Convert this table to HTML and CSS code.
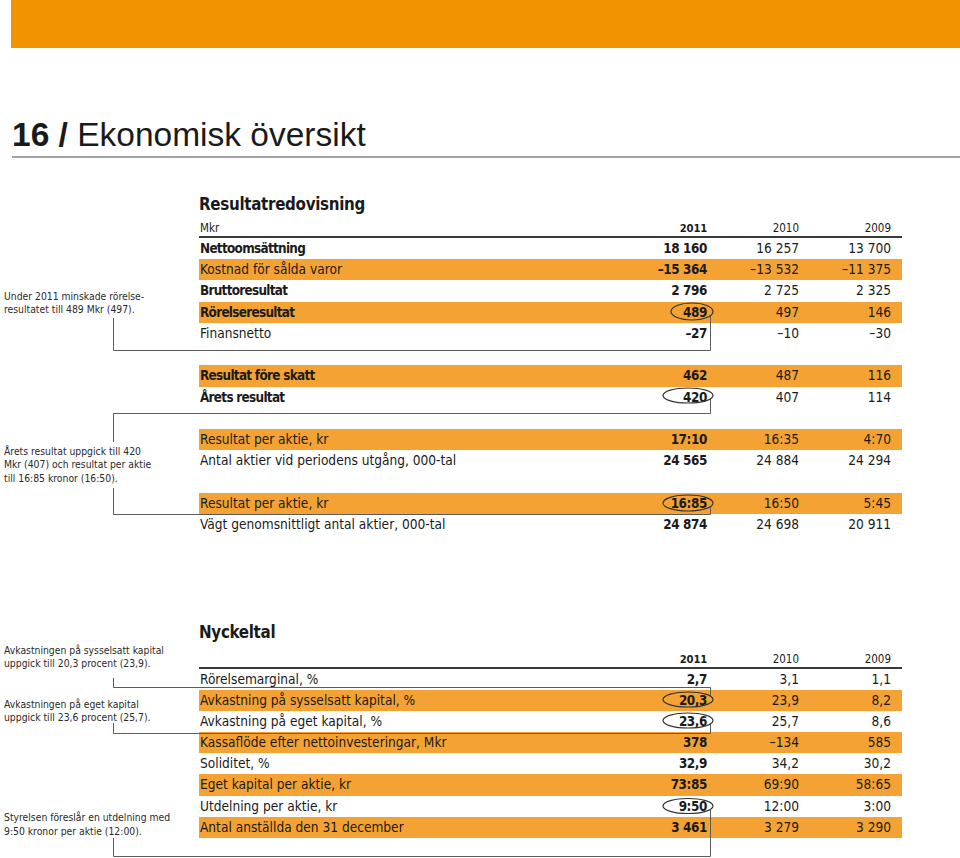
FILE: index.html
```html
<!DOCTYPE html>
<html lang="sv">
<head>
<meta charset="utf-8">
<title>16 / Ekonomisk översikt</title>
<link rel="stylesheet" href="styles.css">
</head>
<body>
<div class="topbar"></div>
<h1 class="page-title"><b>16 /</b> Ekonomisk översikt</h1>

<section class="sheet res">
  <h2 class="sec-title">Resultatredovisning</h2>
  <div class="row head"><span>Mkr</span><span>2011</span><span>2010</span><span>2009</span></div>
  <div class="row strong"><span>Nettoomsättning</span><span>18 160</span><span>16 257</span><span>13 700</span></div>
  <div class="row hl"><span>Kostnad för sålda varor</span><span>–15 364</span><span>–13 532</span><span>–11 375</span></div>
  <div class="row strong"><span>Bruttoresultat</span><span>2 796</span><span>2 725</span><span>2 325</span></div>
  <div class="row hl strong"><span>Rörelseresultat</span><span>489</span><span>497</span><span>146</span></div>
  <div class="row"><span>Finansnetto</span><span>–27</span><span>–10</span><span>–30</span></div>
  <div class="gap"></div>
  <div class="row hl strong"><span>Resultat före skatt</span><span>462</span><span>487</span><span>116</span></div>
  <div class="row strong"><span>Årets resultat</span><span>420</span><span>407</span><span>114</span></div>
  <div class="gap"></div>
  <div class="row hl"><span>Resultat per aktie, kr</span><span>17:10</span><span>16:35</span><span>4:70</span></div>
  <div class="row"><span>Antal aktier vid periodens utgång, 000-tal</span><span>24 565</span><span>24 884</span><span>24 294</span></div>
  <div class="gap"></div>
  <div class="row hl"><span>Resultat per aktie, kr</span><span>16:85</span><span>16:50</span><span>5:45</span></div>
  <div class="row"><span>Vägt genomsnittligt antal aktier, 000-tal</span><span>24 874</span><span>24 698</span><span>20 911</span></div>

  <p class="note rn1">Under 2011 minskade rörelse-<br>resultatet till 489 Mkr (497).</p>
  <p class="note rn2">Årets resultat uppgick till 420<br>Mkr (407) och resultat per aktie<br>till 16:85 kronor (16:50).</p>
</section>

<section class="sheet key">
  <h2 class="sec-title">Nyckeltal</h2>
  <div class="row head"><span></span><span>2011</span><span>2010</span><span>2009</span></div>
  <div class="row"><span>Rörelsemarginal, %</span><span>2,7</span><span>3,1</span><span>1,1</span></div>
  <div class="row hl"><span>Avkastning på sysselsatt kapital, %</span><span>20,3</span><span>23,9</span><span>8,2</span></div>
  <div class="row"><span>Avkastning på eget kapital, %</span><span>23,6</span><span>25,7</span><span>8,6</span></div>
  <div class="row hl"><span>Kassaflöde efter nettoinvesteringar, Mkr</span><span>378</span><span>–134</span><span>585</span></div>
  <div class="row"><span>Soliditet, %</span><span>32,9</span><span>34,2</span><span>30,2</span></div>
  <div class="row hl"><span>Eget kapital per aktie, kr</span><span>73:85</span><span>69:90</span><span>58:65</span></div>
  <div class="row"><span>Utdelning per aktie, kr</span><span>9:50</span><span>12:00</span><span>3:00</span></div>
  <div class="row hl"><span>Antal anställda den 31 december</span><span>3 461</span><span>3 279</span><span>3 290</span></div>

  <p class="note kn1">Avkastningen på sysselsatt kapital<br>uppgick till 20,3 procent (23,9).</p>
  <p class="note kn2">Avkastningen på eget kapital<br>uppgick till 23,6 procent (25,7).</p>
  <p class="note kn3">Styrelsen föreslår en utdelning med<br>9:50 kronor per aktie (12:00).</p>
</section>

<svg class="leaders" width="960" height="858" viewBox="0 0 960 858" aria-hidden="true">
  <g fill="none" stroke="#5c5c5c" stroke-width="1">
    <path d="M113.5 318V350.5H710.5V316"/>
    <path d="M113.5 442V413.5H710.5V399"/>
    <path d="M113.5 488V514.5H710.5V507"/>
    <path d="M113.5 678V687.5H710.5V696"/>
    <path d="M113.5 723V733.5H710.5V724"/>
    <path d="M113.5 838V856.5H710.5V810"/>
  </g>
  <g fill="none" stroke="#333" stroke-width="1.2">
    <ellipse cx="692" cy="311.5" rx="21" ry="8.5"/>
    <ellipse cx="688" cy="395.5" rx="25" ry="7.5"/>
    <ellipse cx="688" cy="503" rx="25" ry="8"/>
    <ellipse cx="688" cy="699.5" rx="25" ry="7.5"/>
    <ellipse cx="688" cy="720.5" rx="25" ry="7.5"/>
    <ellipse cx="688" cy="806" rx="25" ry="7.5"/>
  </g>
</svg>
</body>
</html>
```

FILE: styles.css
```css
* { box-sizing: border-box; }

body {
  margin: 0;
  position: relative;
  width: 960px;
  height: 858px;
  overflow: hidden;
  background: #fff;
  color: #1b1b1b;
  font-family: "DejaVu Sans Condensed", "Liberation Sans", Arial, sans-serif;
}

.topbar {
  margin-left: 11px;
  height: 48px;
  background: #f29400;
}

.page-title {
  margin: 67px 0 0 12px;
  padding-bottom: 1px;
  border-bottom: 2px solid #a3a3a3;
  font-family: "Liberation Sans", Arial, sans-serif;
  font-size: 33.5px;
  line-height: 40px;
  font-weight: normal;
  color: #1a1a1a;
}
.page-title b { font-weight: bold; }

.sheet {
  display: grid;
  grid-template-columns: 199px 703px;
}
.res {
  margin-top: 35.7px;
  grid-template-rows: 27px 17.3px repeat(14, 21.25px);
}
.key {
  margin-top: 86.2px;
  grid-template-rows: 20px 27px repeat(8, 21.15px);
}

.sec-title {
  grid-column: 2;
  margin: 0;
  align-self: start;
  font-size: 16.8px;
  letter-spacing: -0.3px;
  line-height: 20px;
  font-weight: bold;
  color: #1a1a1a;
}

.row {
  grid-column: 2;
  display: grid;
  grid-template-columns: 1fr 92px 92px 92px;
  align-items: baseline;
  padding: 0 11px 0 1px;
  font-size: 13.6px;
  line-height: 21px;
  white-space: nowrap;
}
.row > span:not(:first-child) { text-align: right; }
.row > span:nth-child(2) {
  font-weight: bold;
  font-size: 13.4px;
  letter-spacing: -0.4px;
}
.row.strong > span:first-child {
  font-weight: bold;
  font-size: 13.4px;
  letter-spacing: -0.7px;
}
.row.hl { background: #f4a234; }

.gap { grid-column: 2; }

.head {
  align-items: end;
  font-size: 11.5px;
  line-height: 15px;
  border-bottom: 2px solid #3a3a3a;
}
.head > span:nth-child(2) { font-size: 11.2px; letter-spacing: -0.2px; }

.note {
  grid-column: 1;
  margin: 0;
  padding-left: 4px;
  font-size: 10.3px;
  line-height: 13.3px;
  color: #2a2a2a;
  white-space: nowrap;
}
.rn1 { grid-row: 5 / 7; align-self: center; padding-top: 3px; }
.rn2 { grid-row: 12 / 15; align-self: center; padding-top: 8px; }
.kn1 { grid-row: 2; align-self: end; margin-bottom: -2px; }
.kn2 { grid-row: 4 / 6; align-self: center; }
.kn3 { grid-row: 9 / 11; align-self: end; }

.leaders {
  position: absolute;
  left: 0;
  top: 0;
  pointer-events: none;
}
```
